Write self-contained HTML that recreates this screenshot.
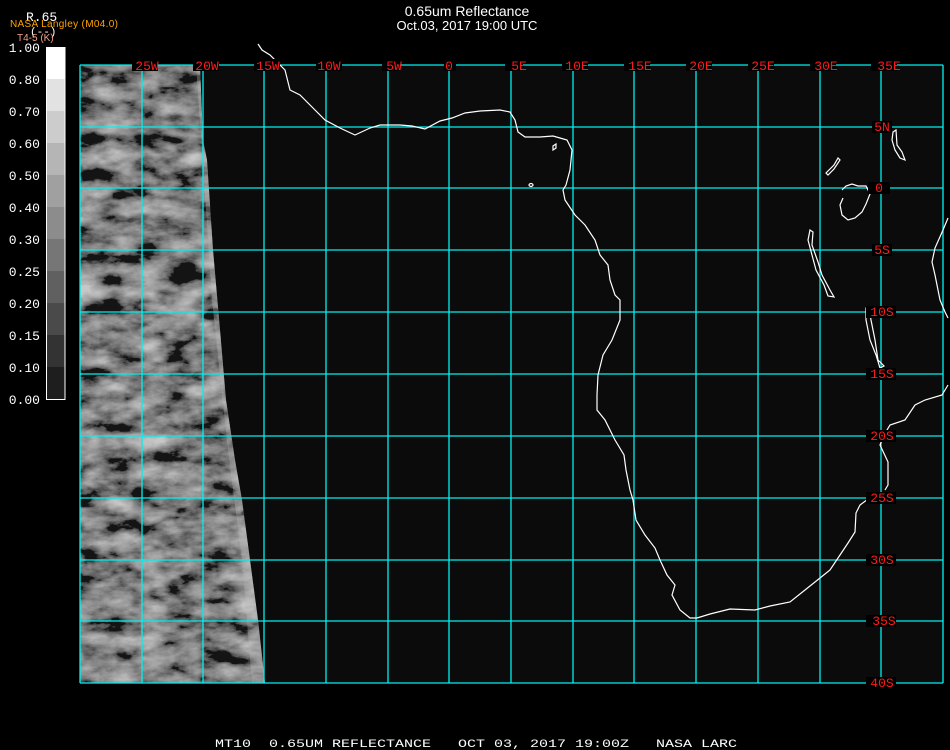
<!DOCTYPE html>
<html><head><meta charset="utf-8"><style>
html,body{margin:0;padding:0;background:#000;}
svg{display:block;}
</style></head><body>
<svg width="950" height="750" viewBox="0 0 950 750" xmlns="http://www.w3.org/2000/svg" font-family="Liberation Mono, monospace">
<defs>
<filter id="tex" x="0" y="0" width="100%" height="100%">
<feTurbulence type="fractalNoise" baseFrequency="0.03 0.06" numOctaves="5" seed="11"/>
<feColorMatrix type="matrix" values="1.2 1.2 0 0 -0.88  1.2 1.2 0 0 -0.88  1.2 1.2 0 0 -0.88  0 0 0 0 1"/>
</filter>
<clipPath id="sw"><polygon points="80,65 200,65 203,140 207,160 213,250 220,330 226,400 235,460 242,500 250,560 258,620 265,683 80,683"/></clipPath>
</defs>
<rect width="950" height="750" fill="#000"/>
<rect x="80" y="65" width="864" height="618" fill="#0b0b0b"/>
<g clip-path="url(#sw)">
<rect x="80" y="65" width="190" height="620" fill="#454545"/>
<rect x="80" y="65" width="190" height="620" filter="url(#tex)" opacity="0.7"/>
<polygon points="196,65 270,65 270,683 252,683 242,560 228,450 212,300 202,150" fill="#bbbbbb" opacity="0.35"/>
</g>
<g stroke="#00f0f0" stroke-width="1.3" fill="none">
<line x1="80" y1="65" x2="80" y2="683"/><line x1="142" y1="65" x2="142" y2="683"/><line x1="203" y1="65" x2="203" y2="683"/><line x1="264" y1="65" x2="264" y2="683"/><line x1="326" y1="65" x2="326" y2="683"/><line x1="388" y1="65" x2="388" y2="683"/><line x1="449" y1="65" x2="449" y2="683"/><line x1="511" y1="65" x2="511" y2="683"/><line x1="573" y1="65" x2="573" y2="683"/><line x1="634" y1="65" x2="634" y2="683"/><line x1="696" y1="65" x2="696" y2="683"/><line x1="758" y1="65" x2="758" y2="683"/><line x1="820" y1="65" x2="820" y2="683"/><line x1="881" y1="65" x2="881" y2="683"/><line x1="943" y1="65" x2="943" y2="683"/>
<line x1="80" y1="65" x2="943" y2="65"/><line x1="80" y1="127" x2="943" y2="127"/><line x1="80" y1="188" x2="943" y2="188"/><line x1="80" y1="250" x2="943" y2="250"/><line x1="80" y1="312" x2="943" y2="312"/><line x1="80" y1="374" x2="943" y2="374"/><line x1="80" y1="436" x2="943" y2="436"/><line x1="80" y1="498" x2="943" y2="498"/><line x1="80" y1="560" x2="943" y2="560"/><line x1="80" y1="621" x2="943" y2="621"/><line x1="80" y1="683" x2="943" y2="683"/>
</g>
<g stroke="#fff" stroke-width="1.2" fill="none">
<polyline points="258,44 262,50 270,55 285,70 290,90 300,95 315,110 325,120 340,128 355,135 370,128 380,125 400,125 412,126 425,129 440,121 452,118 465,113 480,111 500,110 510,112 515,120 518,132 525,137 540,137 553,136 560,138 567,140 572,150 570,170 566,185 563,190 565,200 575,215 585,225 595,240 600,255 608,265 610,280 615,295 620,300 620,320 612,340 603,355 598,375 597,395 597,410 605,420 615,440 624,455 626,470 630,490 633,500 636,520 645,535 655,548 660,560 667,575 675,585 672,595 680,610 690,618 697,618 710,614 730,609 755,610 770,606 790,602 805,590 820,578 830,570 840,555 848,543 855,532 856,513 860,505 868,499 877,497"/>
<polyline points="948,218 943,230 935,248 932,262 935,275 937,285 940,300 945,312 948,318"/>
<polyline points="948,385 942,395 925,400 915,405 905,420 890,425 884,435 880,445 888,462 888,485 885,490"/>
<polygon points="810,230 813,232 812,245 818,262 822,275 830,290 834,297 828,296 824,285 816,270 812,255 808,240"/>
<polygon points="869,307 871,320 875,340 878,360 884,366 880,368 876,355 870,340 866,320 866,308"/>
<polyline points="842,190 846,186 852,184 858,186 866,186 870,194 866,204 862,212 855,218 848,220 842,215 840,205 843,198"/>
<polygon points="893,132 896,130 897,145 902,152 905,160 900,158 895,150 892,140"/>
<polygon points="838,158 834,165 826,173 828,175 834,169 840,160"/>
<ellipse cx="531" cy="185" rx="2" ry="1.5"/>
<polygon points="553,146 556,144 556,148 553,150"/>
</g>
<g fill="#000"><rect x="132" y="59" width="26" height="12"/><rect x="193" y="59" width="26" height="12"/><rect x="254" y="59" width="26" height="12"/><rect x="316" y="59" width="26" height="12"/><rect x="382" y="59" width="18" height="12"/><rect x="444" y="59" width="12" height="12"/><rect x="505" y="59" width="18" height="12"/><rect x="562" y="59" width="26" height="12"/><rect x="624" y="59" width="26" height="12"/><rect x="686" y="59" width="26" height="12"/><rect x="748" y="59" width="26" height="12"/><rect x="810" y="59" width="26" height="12"/><rect x="871" y="59" width="26" height="12"/>
<rect x="872" y="121" width="20" height="12"/><rect x="868" y="182" width="22" height="12"/><rect x="872" y="244" width="20" height="12"/><rect x="866" y="306" width="30" height="12"/><rect x="866" y="368" width="30" height="12"/><rect x="866" y="430" width="30" height="12"/><rect x="866" y="492" width="30" height="12"/><rect x="866" y="554" width="30" height="12"/><rect x="866" y="615" width="30" height="12"/><rect x="866" y="677" width="30" height="12"/></g>
<g fill="#ff1a1a" font-size="13" text-anchor="middle">
<text x="147" y="70">25W</text><text x="207" y="70">20W</text><text x="268" y="70">15W</text><text x="329" y="70">10W</text><text x="394" y="70">5W</text><text x="449" y="70">0</text><text x="519" y="70">5E</text><text x="577" y="70">10E</text><text x="640" y="70">15E</text><text x="701" y="70">20E</text><text x="763" y="70">25E</text><text x="826" y="70">30E</text><text x="889" y="70">35E</text>
<text x="882" y="131">5N</text><text x="879" y="192">0</text><text x="882" y="254">5S</text><text x="882" y="316">10S</text><text x="882" y="378">15S</text><text x="882" y="440">20S</text><text x="882" y="502">25S</text><text x="882" y="564">30S</text><text x="884" y="625">35S</text><text x="882" y="687">40S</text>
</g>
<g>
<rect x="46" y="47" width="19" height="32" fill="#fff"/><rect x="46" y="79" width="19" height="32" fill="#e2e2e2"/><rect x="46" y="111" width="19" height="32" fill="#cccccc"/><rect x="46" y="143" width="19" height="32" fill="#b5b5b5"/><rect x="46" y="175" width="19" height="32" fill="#a0a0a0"/><rect x="46" y="207" width="19" height="32" fill="#8c8c8c"/><rect x="46" y="239" width="19" height="32" fill="#767676"/><rect x="46" y="271" width="19" height="32" fill="#606060"/><rect x="46" y="303" width="19" height="32" fill="#4a4a4a"/><rect x="46" y="335" width="19" height="32" fill="#333"/><rect x="46" y="367" width="19" height="33" fill="#1e1e1e"/>
<rect x="46.5" y="47.5" width="18.5" height="352" fill="none" stroke="#fff" stroke-width="1"/>
</g>
<g fill="#fff" font-size="13" text-anchor="end">
<text x="40" y="52">1.00</text><text x="40" y="84">0.80</text><text x="40" y="116">0.70</text><text x="40" y="148">0.60</text><text x="40" y="180">0.50</text><text x="40" y="212">0.40</text><text x="40" y="244">0.30</text><text x="40" y="276">0.25</text><text x="40" y="308">0.20</text><text x="40" y="340">0.15</text><text x="40" y="372">0.10</text><text x="40" y="404">0.00</text>
</g>
<text x="26" y="21" fill="#fff" font-size="13">R.65</text>
<text x="30" y="35" fill="#fff" font-size="11">(--)</text>
<text x="10" y="27" fill="#ffa500" font-size="10" font-family="Liberation Sans, sans-serif" textLength="108">NASA Langley (M04.0)</text>
<text x="17" y="41" fill="#f4a080" font-size="10" font-family="Liberation Sans, sans-serif">T4-5 (K)</text>
<g fill="#fff" font-family="Liberation Sans, sans-serif" text-anchor="middle">
<text x="467" y="16" font-size="14">0.65um Reflectance</text>
<text x="467" y="30" font-size="13">Oct.03, 2017 19:00 UTC</text>
</g>
<text x="215" y="747" fill="#fff" font-size="11" xml:space="preserve" textLength="522" lengthAdjust="spacingAndGlyphs">MT10  0.65UM REFLECTANCE   OCT 03, 2017 19:00Z   NASA LARC</text>
</svg>
</body></html>
